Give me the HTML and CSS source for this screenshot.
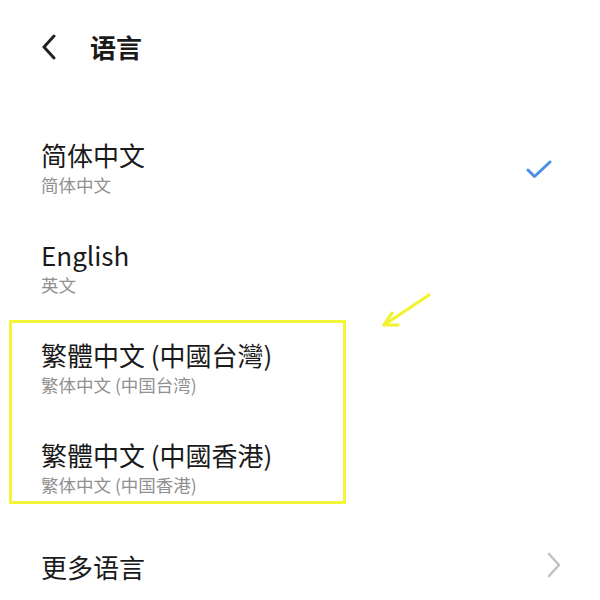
FILE: index.html
```html
<!DOCTYPE html>
<html lang="zh-CN">
<head>
<meta charset="utf-8">
<link rel="stylesheet" href="styles.css">
</head>
<body>
<div class="page">
  <header class="header">
    <svg class="back" width="18" height="26" viewBox="0 0 18 26"><path d="M14 2 L4 13 L14 24" fill="none" stroke="#222" stroke-width="3" stroke-linecap="round" stroke-linejoin="round"/></svg>
    <span class="header-title">语言</span>
  </header>
  <ul class="list">
    <li class="row">
      <div class="texts">
        <div class="title">简体中文</div>
        <div class="sub">简体中文</div>
      </div>
      <svg class="check" width="26" height="20" viewBox="0 0 26 20"><path d="M2 10 L8.5 16.5 L24 2" fill="none" stroke="#4a8fe2" stroke-width="3" stroke-linecap="round" stroke-linejoin="round"/></svg>
    </li>
    <li class="row">
      <div class="texts">
        <div class="title">English</div>
        <div class="sub">英文</div>
      </div>
    </li>
    <li class="row">
      <div class="texts">
        <div class="title">繁體中文 (中國台灣)</div>
        <div class="sub">繁体中文 (中国台湾)</div>
      </div>
    </li>
    <li class="row">
      <div class="texts">
        <div class="title">繁體中文 (中國香港)</div>
        <div class="sub">繁体中文 (中国香港)</div>
      </div>
    </li>
    <li class="row more">
      <div class="title">更多语言</div>
      <svg class="chev" width="16" height="26" viewBox="0 0 16 26"><path d="M3 2 L13 13 L3 24" fill="none" stroke="#c2c2c2" stroke-width="2.6" stroke-linecap="round" stroke-linejoin="round"/></svg>
    </li>
  </ul>
  <div class="highlight"></div>
  <svg class="arrow" width="60" height="45" viewBox="0 0 60 45"><g fill="none" stroke="#f2f230" stroke-width="3.2" stroke-linecap="round" stroke-linejoin="round"><path d="M55 4 L10 34"/><path d="M18 22 L10 34 L24 34"/></g></svg>
</div>
</body>
</html>
```
FILE: styles.css
```css
html, body {
  margin: 0;
  padding: 0;
  background: #fff;
}
.page {
  position: relative;
  width: 600px;
  height: 600px;
  overflow: hidden;
  font-family: "Noto Sans CJK SC", "Noto Sans", sans-serif;
  color: #1a1a1a;
}
.header {
  height: 94px;
  display: flex;
  align-items: center;
  padding-left: 40px;
  box-sizing: border-box;
}
.back {
  display: block;
}
.header-title {
  margin-left: 32px;
  font-size: 26px;
  font-weight: 700;
  line-height: 32px;
}
.list {
  list-style: none;
  margin: 0;
  padding: 25px 0 0;
}
.row {
  display: flex;
  align-items: center;
  justify-content: space-between;
  height: 100px;
  padding: 0 46px 0 41px;
  box-sizing: border-box;
}
.title {
  font-size: 26px;
  line-height: 32px;
  font-weight: 400;
  white-space: nowrap;
}
.sub {
  font-size: 17.5px;
  line-height: 28px;
  color: #909090;
  white-space: nowrap;
}
.check {
  display: block;
  margin-right: 2px;
  margin-top: 2px;
}
.more {
  height: 95px;
  padding-right: 38px;
}
.chev {
  display: block;
  margin-top: -3px;
}
.highlight {
  position: absolute;
  left: 9px;
  top: 320px;
  width: 331px;
  height: 178px;
  border: 3px solid #f4f43a;
}
.arrow {
  position: absolute;
  left: 374px;
  top: 291px;
}
```
